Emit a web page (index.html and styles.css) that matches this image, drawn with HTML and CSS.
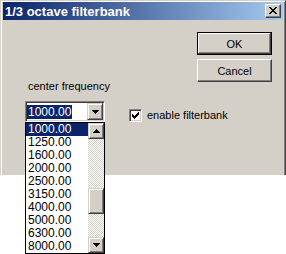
FILE: index.html
```html
<!DOCTYPE html>
<html lang="en">
<head>
  <meta charset="UTF-8">
  <title>1/3 octave filterbank</title>
  <link rel="stylesheet" href="styles.css">
</head>
<body>
  <div class="window">
    <div class="titlebar">
      <span class="title">1/3 octave filterbank</span>
      <button class="close" type="button" aria-label="Close">
        <svg width="8" height="7" shape-rendering="crispEdges"><path d="M0 0h2v1H0zM6 0h2v1H6zM1 1h2v1H1zM5 1h2v1H5zM2 2h4v1H2zM3 3h2v1H3zM2 4h4v1H2zM1 5h2v1H1zM5 5h2v1H5zM0 6h2v1H0zM6 6h2v1H6z"/></svg>
      </button>
    </div>
    <div class="client">
      <div class="main">
        <div class="label">center frequency</div>
        <div class="row">
          <div class="combo">
            <div class="combo-field"><span class="sel">1000.00</span></div>
            <div class="bevel drop-btn">
              <svg width="7" height="4" shape-rendering="crispEdges"><path d="M0 0h7v1H0zM1 1h5v1H1zM2 2h3v1H2zM3 3h1v1H3z"/></svg>
            </div>
            <!-- open dropdown list -->
            <div class="droplist">
              <ul class="items">
                <li class="on">1000.00</li>
                <li>1250.00</li>
                <li>1600.00</li>
                <li>2000.00</li>
                <li>2500.00</li>
                <li>3150.00</li>
                <li>4000.00</li>
                <li>5000.00</li>
                <li>6300.00</li>
                <li>8000.00</li>
              </ul>
              <div class="scrollbar">
                <div class="bevel sb-btn">
                  <svg width="7" height="4" shape-rendering="crispEdges"><path d="M3 0h1v1H3zM2 1h3v1H2zM1 2h5v1H1zM0 3h7v1H0z"/></svg>
                </div>
                <div class="track"><div class="bevel thumb"></div></div>
                <div class="bevel sb-btn">
                  <svg width="7" height="4" shape-rendering="crispEdges"><path d="M0 0h7v1H0zM1 1h5v1H1zM2 2h3v1H2zM3 3h1v1H3z"/></svg>
                </div>
              </div>
            </div>
          </div>
          <label class="check">
            <span class="box">
              <svg width="7" height="7" shape-rendering="crispEdges"><path d="M6 0h1v1H6zM5 1h2v1H5zM0 2h1v1H0zM4 2h3v1H4zM0 3h2v1H0zM3 3h3v1H3zM0 4h5v1H0zM1 5h3v1H1zM2 6h1v1H2z"/></svg>
            </span>
            enable filterbank
          </label>
        </div>
      </div>
      <div class="buttons">
        <button class="btn default" type="button">OK</button>
        <button class="btn" type="button">Cancel</button>
      </div>
    </div>
  </div>
</body>
</html>
```

FILE: styles.css
```css
html, body { height:254px; }
body { margin:0; background:#fff; font-family:"Liberation Sans", Arial, sans-serif; font-size:11px; color:#000; }

.window {
  width:286px; height:175px; box-sizing:border-box;
  background:#d4d0c8;
  border-top:1px solid #d4d0c8; border-left:1px solid #d4d0c8; border-right:1px solid #404040;
  padding:1px 2px 0 2px;
  box-shadow:inset 1px 1px 0 #fff, inset -1px 0 0 #808080;
  display:flex; flex-direction:column;
}

.titlebar {
  height:18px; display:flex; align-items:center; justify-content:space-between;
  background:linear-gradient(to right, #0a246a, #a6caf0);
  padding:0 2px 0 2px;
}
.title { color:#fff; font-weight:bold; font-size:13px; }
.close {
  width:16px; height:14px; padding:0; margin:0;
  background:#d4d0c8; border:1px solid; border-color:#fff #404040 #404040 #fff;
  box-shadow:inset -1px -1px 0 #808080;
  display:flex; align-items:center; justify-content:center;
}
.close svg { margin:0 1px 1px 0; }

.client { flex:1; display:flex; }
.main { flex:1; min-width:0; padding:60px 0 0 22px; }
.label { line-height:13px; padding-left:3px; }
.row { display:flex; align-items:flex-start; margin-top:8px; }

.combo {
  position:relative; flex:none; width:80px; height:21px; box-sizing:border-box;
  background:#fff; border:1px solid; border-color:#808080 #fff #fff #808080;
  box-shadow:inset 1px 1px 0 #404040, inset -1px -1px 0 #d4d0c8;
  padding:1px; display:flex;
}
.combo-field { flex:1; display:flex; align-items:center; }
.sel { background:#0a246a; color:#fff; font-size:12px; line-height:14px; padding:0 1px; }

.bevel {
  box-sizing:border-box; background:#d4d0c8;
  border:1px solid; border-color:#d4d0c8 #404040 #404040 #d4d0c8;
  box-shadow:inset 1px 1px 0 #fff, inset -1px -1px 0 #808080;
}
.drop-btn { width:16px; height:17px; display:flex; align-items:center; justify-content:center; }

.droplist {
  position:absolute; left:-1px; top:20px; width:80px; height:132px; box-sizing:border-box;
  border:1px solid #000; background:#fff; display:flex; z-index:2;
}
.items { list-style:none; margin:0; padding:0; flex:1; }
.items li { height:13px; line-height:13px; font-size:12px; padding-left:2px; }
.items li.on { background:#0a246a; color:#fff; }

.scrollbar { width:16px; display:flex; flex-direction:column; }
.sb-btn { height:16px; display:flex; align-items:center; justify-content:center; }
.track { flex:1; background:repeating-conic-gradient(#d4d0c8 0 25%, #fff 0 50%) 0 0/2px 2px; }
.thumb { height:26px; margin-top:49px; }

.check { flex:none; white-space:nowrap; display:flex; align-items:center; gap:5px; margin:8px 0 0 24px; line-height:13px; }
.box {
  width:13px; height:13px; box-sizing:border-box; background:#fff;
  border:1px solid; border-color:#808080 #fff #fff #808080;
  box-shadow:inset 1px 1px 0 #404040, inset -1px -1px 0 #d4d0c8;
  display:flex; align-items:center; justify-content:center;
}

.buttons { flex:none; display:flex; flex-direction:column; gap:4px; padding:12px 11px 0 0; }
.btn {
  width:75px; height:23px; box-sizing:border-box; padding:0;
  font:11px "Liberation Sans", Arial, sans-serif; color:#000;
  background:#d4d0c8; border:1px solid; border-color:#fff #404040 #404040 #fff;
  box-shadow:inset -1px -1px 0 #808080;
}
.btn.default {
  border-color:#000;
  box-shadow:inset -1px -1px 0 #404040, inset 1px 1px 0 #fff, inset -2px -2px 0 #808080;
}
```
